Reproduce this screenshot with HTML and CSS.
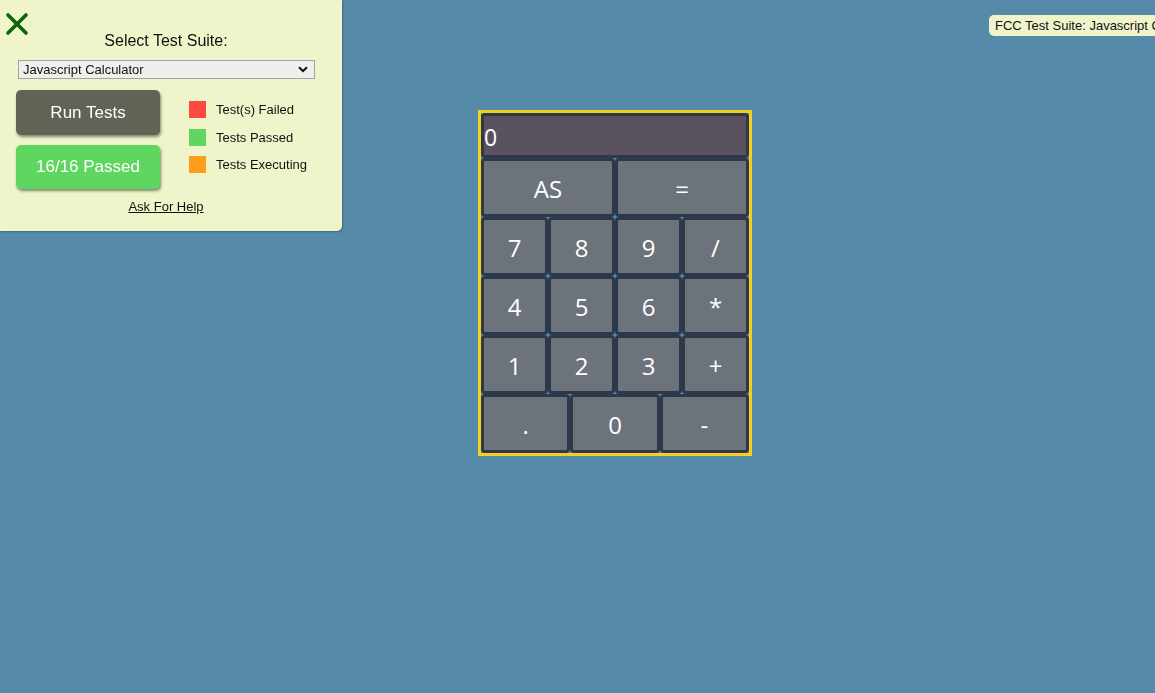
FILE: index.html
```html
<!DOCTYPE html>
<html>
<head>
<meta charset="utf-8">
<link rel="stylesheet" href="styles.css">
</head>
<body>
<main class="stage">
  <div class="calculator">
    <div class="display">0</div>
    <button class="key wide">AS</button>
    <button class="key wide">=</button>
    <button class="key">7</button>
    <button class="key">8</button>
    <button class="key">9</button>
    <button class="key">/</button>
    <button class="key">4</button>
    <button class="key">5</button>
    <button class="key">6</button>
    <button class="key">*</button>
    <button class="key">1</button>
    <button class="key">2</button>
    <button class="key">3</button>
    <button class="key">+</button>
    <button class="key third">.</button>
    <button class="key third">0</button>
    <button class="key third">-</button>
  </div>
</main>

<aside class="suite">
  <svg class="close" width="24" height="24" viewBox="0 0 24 24">
    <path d="M3 3 L21 21 M21 3 L3 21" stroke="#0b650b" stroke-width="3.6" stroke-linecap="round" fill="none"/>
  </svg>
  <div class="suite-title">Select Test Suite:</div>
  <div class="select">
    <span>Javascript Calculator</span>
    <svg width="10" height="7" viewBox="0 0 10 7"><path d="M1 1.2 L5 5 L9 1.2" stroke="#111" stroke-width="2" fill="none"/></svg>
  </div>
  <div class="suite-body">
    <div class="buttons">
      <div class="btn run">Run Tests</div>
      <div class="btn passed">16/16 Passed</div>
    </div>
    <ul class="legend">
      <li><span class="sw red"></span>Test(s) Failed</li>
      <li><span class="sw green"></span>Tests Passed</li>
      <li><span class="sw orange"></span>Tests Executing</li>
    </ul>
  </div>
  <a class="help">Ask For Help</a>
</aside>

<div class="tag">FCC Test Suite: Javascript Calculator</div>
</body>
</html>
```

FILE: styles.css
```css
html, body {
  margin: 0;
  padding: 0;
}
body {
  background: #558ba9;
  width: 1155px;
  height: 693px;
  overflow: hidden;
  font-family: "Liberation Sans", Arial, sans-serif;
}
.stage {
  padding: 110px 0 0 478px;
}
.calculator {
  width: 268px;
  border: 3px solid #f7cf1e;
  display: grid;
  grid-template-columns: repeat(12, 1fr);
  grid-auto-rows: 59px;
  grid-template-rows: 45px;
}
.display {
  grid-column: span 12;
  border: 3px solid #2d394b;
  border-radius: 4px;
  background: #5a535f;
  color: #fff;
  font-family: "Open Sans", sans-serif;
  font-size: 23px;
  line-height: 39px;
  padding-top: 2px;
  box-sizing: border-box;
}
.key {
  grid-column: span 3;
  border: 3px solid #2d394b;
  border-radius: 4px;
  background: #6c737b;
  color: #fff;
  font-family: "Open Sans", sans-serif;
  font-size: 24px;
  padding: 3px 0 0;
  margin: 0;
  line-height: 50px;
  text-align: center;
}
.key.wide { grid-column: span 6; }
.key.third { grid-column: span 4; }

.suite {
  position: fixed;
  left: 0;
  top: 0;
  width: 342px;
  height: 231px;
  background: #eff4ca;
  border-bottom-right-radius: 5px;
  box-shadow: 1px 1px 2px rgba(0,0,0,0.25);
  box-sizing: border-box;
  padding-top: 13px;
}
.close {
  position: absolute;
  left: 5px;
  top: 12px;
}
.suite-title {
  text-align: center;
  font-size: 16px;
  line-height: 18px;
  padding-right: 10px;
  color: #111;
  margin-top: 19px;
  height: 18px;
}
.select {
  margin: 10px 0 0 18px;
  width: 297px;
  height: 19px;
  box-sizing: border-box;
  border: 1px solid #a2a2a2;
  background: #efefef;
  font-size: 13px;
  display: flex;
  align-items: center;
  justify-content: space-between;
  padding: 0 6px 0 4px;
  color: #111;
}
.suite-body {
  display: flex;
  margin-top: 11px;
  padding-left: 16px;
}
.buttons {
  display: flex;
  flex-direction: column;
  gap: 10px;
}
.btn {
  width: 144px;
  height: 45px;
  border-radius: 5px;
  color: #fff;
  font-size: 17px;
  line-height: 45px;
  text-align: center;
  box-shadow: 1px 2px 3px rgba(0,0,0,0.45);
}
.btn.run { background: #626256; }
.btn.passed { background: #5fd65f; height: 44px; line-height: 44px; }
.legend {
  list-style: none;
  margin: 11px 0 0 29px;
  padding: 0;
  display: flex;
  flex-direction: column;
  gap: 10.5px;
}
.legend li {
  display: flex;
  align-items: center;
  font-size: 13px;
  color: #111;
  height: 17px;
}
.sw {
  width: 17px;
  height: 17px;
  margin-right: 10px;
}
.sw.red { background: #fd4a3f; }
.sw.green { background: #5fd65f; }
.sw.orange { background: #fd9e1a; }
.help {
  display: block;
  text-align: center;
  font-size: 13px;
  text-decoration: underline;
  color: #111;
  margin-top: 10px;
  padding-left: 1px;
  width: 330px;
}
.tag {
  position: fixed;
  left: 989px;
  top: 15px;
  height: 21px;
  line-height: 21px;
  padding: 0 6px;
  background: #eff4ca;
  border-radius: 5px;
  font-size: 13px;
  color: #111;
  white-space: nowrap;
}
```
